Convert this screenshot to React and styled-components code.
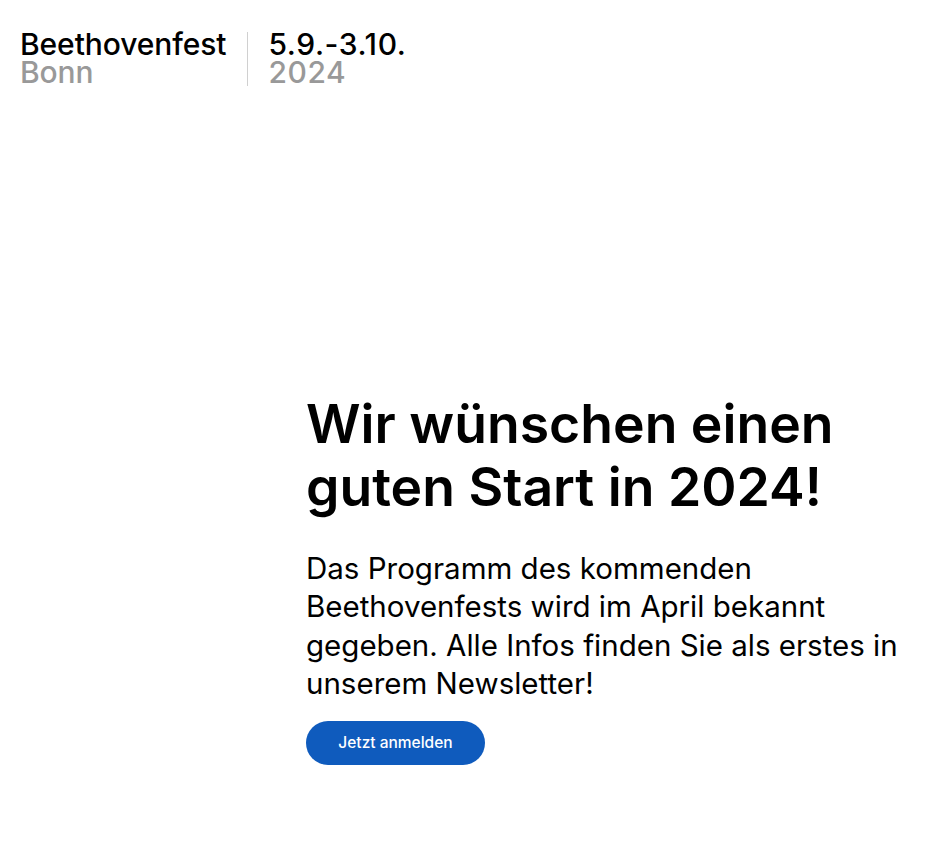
import React from "react";
import styled, { createGlobalStyle } from "styled-components";

const Global = createGlobalStyle`
  html, body { margin: 0; padding: 0; background: #fff; }
  body { font-family: Inter, "Noto Sans", sans-serif; color: #000; }
`;

const Page = styled.div`
  padding: 0 20px;
  min-height: 862px;
  box-sizing: border-box;
`;

const Header = styled.header`
  display: flex;
  align-items: stretch;
  padding-top: 30px;
`;

const LogoBlock = styled.div`
  display: flex;
  flex-direction: column;
  font-size: 30px;
  line-height: 28px;
  font-weight: 500;
  letter-spacing: ${(p) => p.$ls || 0}px;
  padding-right: ${(p) => p.$pr || 0}px;
  padding-left: ${(p) => p.$pl || 0}px;
`;

const Divider = styled.div`
  width: 1px;
  background: #d0d0d0;
  margin: 2px 0 0;
`;

const Dark = styled.span`
  color: #000;
`;
const Gray = styled.span`
  color: #999;
`;

const Main = styled.main`
  display: grid;
  grid-template-columns: 286px 1fr;
  padding-top: 306px;
`;

const Content = styled.section`
  grid-column: 2;
`;

const Title = styled.h1`
  margin: 0;
  font-size: 53.5px;
  line-height: 63px;
  font-weight: 600;
  letter-spacing: 0;
`;

const Text = styled.p`
  margin: 31px 0 0;
  font-size: 29.5px;
  line-height: 38.4px;
  font-weight: 400;
`;

const Button = styled.button`
  margin-top: 18px;
  height: 44px;
  width: 179px;
  border: 0;
  border-radius: 22px;
  background: #0f5bbd;
  color: #fff;
  font-family: Inter, "Noto Sans", sans-serif;
  font-size: 15.5px;
  font-weight: 500;
  cursor: pointer;
`;

export default function App() {
  return (
    <>
      <Global />
      <Page>
        <Header>
          <LogoBlock $pr={21} $ls={-0.1}>
            <Dark>Beethovenfest</Dark>
            <Gray>Bonn</Gray>
          </LogoBlock>
          <Divider />
          <LogoBlock $pl={20} $ls={0.6}>
            <Dark>5.9.-3.10.</Dark>
            <Gray>2024</Gray>
          </LogoBlock>
        </Header>
        <Main>
          <Content>
            <Title>
              Wir wünschen einen
              <br />
              guten Start in 2024!
            </Title>
            <Text>
              Das Programm des kommenden Beethovenfests wird im April bekannt
              gegeben. Alle Infos finden Sie als erstes in unserem Newsletter!
            </Text>
            <Button>Jetzt anmelden</Button>
          </Content>
        </Main>
      </Page>
    </>
  );
}
